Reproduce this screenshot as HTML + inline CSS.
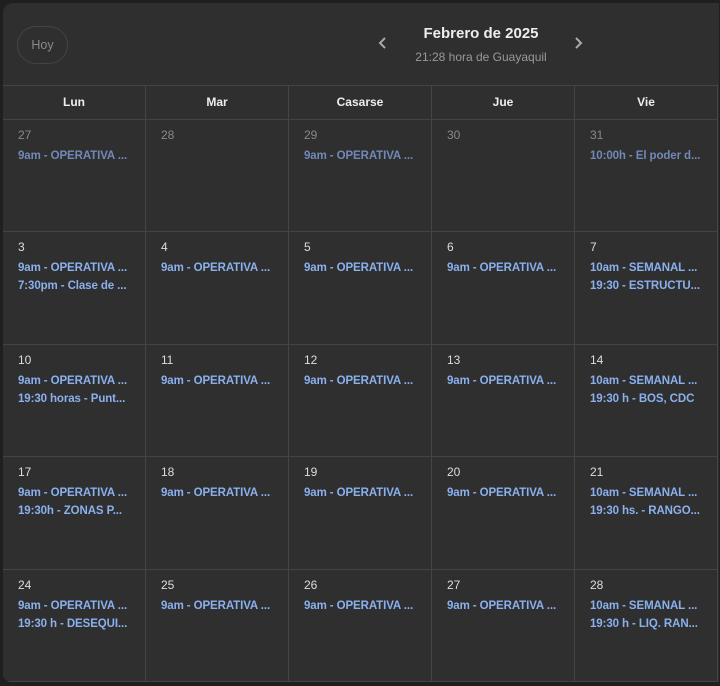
<!DOCTYPE html>
<html><head><style>
body{margin:0;width:720px;height:686px;background:#1f1f1f;font-family:"Liberation Sans",sans-serif;overflow:hidden;position:relative}
.panel{position:absolute;left:3px;top:3px;width:716px;height:679px;background:#2f2f2f;border-radius:10px 0 0 8px;overflow:hidden}
.hoy{position:absolute;left:14px;top:23px;width:49px;height:36px;border:1px solid #444;border-radius:19px;color:#8a8a8a;font-size:12.5px;line-height:36px;text-align:center}
.title{position:absolute;left:378px;top:22px;width:200px;text-align:center;color:#eee;font-weight:bold;font-size:15px}
.sub{position:absolute;left:378px;top:47px;width:200px;text-align:center;color:#999;font-size:12px}
.arr{position:absolute;top:33px;width:10px;height:14px}
.grid{position:absolute;left:0;top:82px}
.hd{position:absolute;top:0;height:35px;line-height:33px;text-align:center;color:#eee;font-weight:bold;font-size:12px;border-top:1px solid #444;border-bottom:1px solid #444;border-right:1px solid #444;box-sizing:border-box}
.c{position:absolute;border-right:1px solid #444;border-bottom:1px solid #444;box-sizing:border-box;padding:7px 0 0 15px;font-size:11.5px;letter-spacing:-0.1px}
.n{color:#ddd;height:17px;line-height:17px;font-size:12px}
.p .n{color:#888}
.e{color:#8ab0ee;font-weight:bold;height:17px;line-height:17px;margin-top:1px;white-space:nowrap}
.n+.e{margin-top:4px}
.p .e{color:#7189b8}
</style></head><body>
<div class="panel">
<div class="hoy">Hoy</div>
<svg class="arr" style="left:375px" viewBox="0 0 10 14"><path d="M7 2 L2 7 L7 12" stroke="#aaa" stroke-width="2" fill="none"/></svg>
<div class="title">Febrero de 2025</div>
<div class="sub">21:28 hora de Guayaquil</div>
<svg class="arr" style="left:570px" viewBox="0 0 10 14"><path d="M3 2 L8 7 L3 12" stroke="#aaa" stroke-width="2" fill="none"/></svg>
<div class="grid" id="g"></div>
</div>
<script>
var xs=[0,143,286,429,572,715],H=["Lun","Mar","Casarse","Jue","Vie"],ys=[35,147,260,372,485,597];
var d=[
[["27",["9am - OPERATIVA ..."],1],["28",[],1],["29",["9am - OPERATIVA ..."],1],["30",[],1],["31",["10:00h - El poder d..."],1]],
[["3",["9am - OPERATIVA ...","7:30pm - Clase de ..."]],["4",["9am - OPERATIVA ..."]],["5",["9am - OPERATIVA ..."]],["6",["9am - OPERATIVA ..."]],["7",["10am - SEMANAL ...","19:30 - ESTRUCTU..."]]],
[["10",["9am - OPERATIVA ...","19:30 horas - Punt..."]],["11",["9am - OPERATIVA ..."]],["12",["9am - OPERATIVA ..."]],["13",["9am - OPERATIVA ..."]],["14",["10am - SEMANAL ...","19:30 h - BOS, CDC"]]],
[["17",["9am - OPERATIVA ...","19:30h - ZONAS P..."]],["18",["9am - OPERATIVA ..."]],["19",["9am - OPERATIVA ..."]],["20",["9am - OPERATIVA ..."]],["21",["10am - SEMANAL ...","19:30 hs. - RANGO..."]]],
[["24",["9am - OPERATIVA ...","19:30 h - DESEQUI..."]],["25",["9am - OPERATIVA ..."]],["26",["9am - OPERATIVA ..."]],["27",["9am - OPERATIVA ..."]],["28",["10am - SEMANAL ...","19:30 h - LIQ. RAN..."]]]];
var h="";
for(var i=0;i<5;i++)h+='<div class="hd" style="left:'+xs[i]+'px;width:'+(xs[i+1]-xs[i])+'px">'+H[i]+'</div>';
for(var r=0;r<5;r++)for(var i=0;i<5;i++){var c=d[r][i];
h+='<div class="c'+(c[2]?' p':'')+'" style="left:'+xs[i]+'px;top:'+ys[r]+'px;width:'+(xs[i+1]-xs[i])+'px;height:'+(ys[r+1]-ys[r])+'px"><div class="n">'+c[0]+'</div>';
c[1].forEach(function(e){h+='<div class="e">'+e+'</div>'});h+='</div>';}
document.getElementById("g").innerHTML=h;
</script>
</body></html>
